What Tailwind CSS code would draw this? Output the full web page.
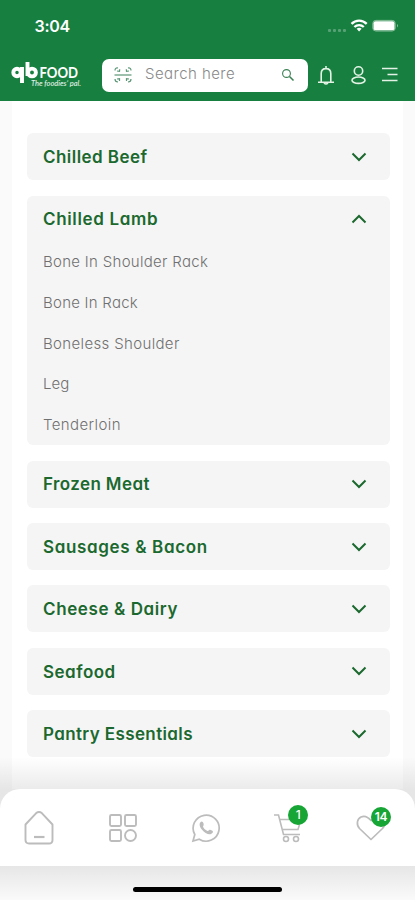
<!DOCTYPE html>
<html lang="en">
<head>
<meta charset="utf-8">
<meta name="viewport" content="width=device-width, initial-scale=1">
<title>QB Food</title>
<script src="https://cdn.jsdelivr.net/npm/@tailwindcss/browser@4"></script>
</head>
<body class="bg-[#fafafa] font-['Inter','Open_Sans',sans-serif] [font-feature-settings:'cv11']">
<div class="relative flex h-[900px] w-[415px] flex-col overflow-hidden">
  <header class="flex h-[101px] shrink-0 flex-col bg-[#178040] text-white">
    <div class="flex h-[51px] items-center justify-between pl-[34.500px] pr-[16px]">
      <span class="text-[16px] font-semibold leading-none -tracking-[0.300px]">3:04</span>
      <svg class="h-[16px] w-[72px]" viewBox="0 0 72 16" fill="none">
        <g fill="#58a175"><rect x="1" y="11" width="3" height="3" rx="1"/><rect x="6" y="11" width="3" height="3" rx="1"/><rect x="11" y="11" width="3" height="3" rx="1"/><rect x="16" y="11" width="3" height="3" rx="1"/></g>
        <g stroke="#fff" stroke-width="2.300"><path d="M24.500 5.900C28.800 1.500 35.400 1.500 39.700 5.900"/><path d="M27.400 9C30 6.500 34.200 6.500 36.800 9"/></g>
        <path d="M29.600 10.700Q32.100 8.700 34.600 10.700L32.100 13.500Z" fill="#fff"/>
        <rect x="45.800" y="2.400" width="22.400" height="10.600" rx="3" stroke="#8bc09e" stroke-width="1"/>
        <rect x="46.500" y="3.200" width="21" height="9" rx="2" fill="#fff"/>
        <path d="M70 6Q72 7.700 70 9.500Z" fill="#8bc09e"/>
      </svg>
    </div>
    <div class="flex h-[48px] items-center pl-[11px] pr-[17px]">
      <svg class="h-[32px] w-[72px] shrink-0" viewBox="0 0 72 32">
        <g fill="none" stroke="#fff" stroke-width="3.900"><circle cx="6" cy="13.500" r="3.700"/><circle cx="21" cy="13.500" r="3.900"/><path d="M11 8V24M16.500 3V17"/></g>
        <text x="28.500" y="18.500" class="font-['Lato',sans-serif] text-[14.500px] font-bold" fill="#fff" textLength="38.500" lengthAdjust="spacingAndGlyphs">FOOD</text>
        <text x="20" y="27" class="font-['Lato',sans-serif] text-[7px] font-medium italic" fill="#e6f3e9" textLength="50" lengthAdjust="spacingAndGlyphs">The foodies’ pal.</text>
      </svg>
      <div class="ml-[18.500px] flex h-[33px] w-[206.500px] items-center rounded-[7px] bg-white pl-[11px] pr-[13px]">
        <svg class="h-[18px] w-[20px]" viewBox="0 0 20 18" fill="none" stroke="#5b9676" stroke-width="1.200">
          <path d="M1.500 9H18.500"/><path d="M2 4.500Q2 1.500 5 2M4 5L6.500 5.300L6.700 3.300M18 4.500Q18 1.500 15 2M16 5L13.500 5.300L13.300 3.300M2 13Q2 16 5 16M4 13L6.500 12.700L6.500 15M18 13Q18 16 15 16M16 13L13.500 12.700L13.500 15"/>
        </svg>
        <span class="relative -top-px ml-[12.500px] grow whitespace-nowrap text-[15px] font-light tracking-[0.450px] text-[#888]">Search here</span>
        <svg class="h-[14px] w-[14px]" viewBox="0 0 14 14" fill="none" stroke="#3b8054"><circle cx="5.500" cy="5.500" r="3.900" stroke-width="1.100"/><path d="M8.500 8.500L12.500 12.500" stroke-width="1.600"/></svg>
      </div>
      <div class="flex grow items-center justify-between pl-[9px]">
        <svg class="h-[20px] w-[18px]" viewBox="0 0 18 20" fill="none" stroke="#e3f2e5" stroke-width="1.600"><path d="M4.200 17.300V8.500C4.200 5.500 6 3.600 9 3.600S13.800 5.500 13.800 8.500V17.300M1 17.300H17M9 1V3.500"/><path d="M7 18Q9 20 11 18"/></svg>
        <svg class="h-[20px] w-[17px]" viewBox="0 0 17 20" fill="none" stroke="#e3f2e5" stroke-width="1.600"><circle cx="8.500" cy="6" r="4.200"/><ellipse cx="8.500" cy="15.200" rx="6.500" ry="3.200"/></svg>
        <svg class="h-[20px] w-[17px]" viewBox="0 0 17 20" fill="none" stroke="#e3f2e5" stroke-width="1.700"><path d="M1 3.500H16.500M6.500 9.500H16.500M1 15.500H16.500"/></svg>
      </div>
    </div>
  </header>

  <main class="mx-[12px] flex grow flex-col gap-[15.500px] bg-white px-[14.500px] pt-[32.300px] pr-[13.500px] text-[17px] font-semibold text-[#1b692f]">
    <section class="flex h-[46.900px] shrink-0 items-center justify-between rounded-[6px] bg-[#f5f5f5] pl-[16.500px] pr-[23px]"><h2 class="pt-[2px] tracking-[0.450px]">Chilled Beef</h2><svg class="h-[10px] w-[16px]" viewBox="0 0 16 10" fill="none" stroke="currentColor" stroke-width="2"><path d="M1.500 1.500L8 8L14.500 1.500"/></svg></section>
    <section class="h-[249.500px] shrink-0 rounded-[6px] bg-[#f5f5f5] pl-[16.500px] pr-[23px]">
      <div class="flex h-[46.500px] items-center justify-between"><h2 class="pt-[2px] tracking-[0.650px]">Chilled Lamb</h2><svg class="h-[10px] w-[16px]" viewBox="0 0 16 10" fill="none" stroke="currentColor" stroke-width="2"><path d="M1.500 8.500L8 2L14.500 8.500"/></svg></div>
      <ul class="text-[15px] font-light leading-[40.700px] text-[#707070]">
        <li class="tracking-[0.300px]">Bone In Shoulder Rack</li>
        <li class="tracking-[0.250px]">Bone In Rack</li>
        <li class="tracking-[0.350px]">Boneless Shoulder</li>
        <li class="tracking-[0.100px]">Leg</li>
        <li class="tracking-[0.400px]">Tenderloin</li>
      </ul>
    </section>
    <section class="flex h-[46.900px] shrink-0 items-center justify-between rounded-[6px] bg-[#f5f5f5] pl-[16.500px] pr-[23px]"><h2 class="pt-[2px] tracking-[0.400px]">Frozen Meat</h2><svg class="h-[10px] w-[16px]" viewBox="0 0 16 10" fill="none" stroke="currentColor" stroke-width="2"><path d="M1.500 1.500L8 8L14.500 1.500"/></svg></section>
    <section class="flex h-[46.900px] shrink-0 items-center justify-between rounded-[6px] bg-[#f5f5f5] pl-[16.500px] pr-[23px]"><h2 class="pt-[2px] tracking-[0.650px]">Sausages &amp; Bacon</h2><svg class="h-[10px] w-[16px]" viewBox="0 0 16 10" fill="none" stroke="currentColor" stroke-width="2"><path d="M1.500 1.500L8 8L14.500 1.500"/></svg></section>
    <section class="flex h-[46.900px] shrink-0 items-center justify-between rounded-[6px] bg-[#f5f5f5] pl-[16.500px] pr-[23px]"><h2 class="pt-[2px] tracking-[0.600px]">Cheese &amp; Dairy</h2><svg class="h-[10px] w-[16px]" viewBox="0 0 16 10" fill="none" stroke="currentColor" stroke-width="2"><path d="M1.500 1.500L8 8L14.500 1.500"/></svg></section>
    <section class="flex h-[46.900px] shrink-0 items-center justify-between rounded-[6px] bg-[#f5f5f5] pl-[16.500px] pr-[23px]"><h2 class="pt-[2px] tracking-[0.500px]">Seafood</h2><svg class="h-[10px] w-[16px]" viewBox="0 0 16 10" fill="none" stroke="currentColor" stroke-width="2"><path d="M1.500 1.500L8 8L14.500 1.500"/></svg></section>
    <section class="flex h-[46.900px] shrink-0 items-center justify-between rounded-[6px] bg-[#f5f5f5] pl-[16.500px] pr-[23px]"><h2 class="pt-[2px] tracking-[0.380px]">Pantry Essentials</h2><svg class="h-[10px] w-[16px]" viewBox="0 0 16 10" fill="none" stroke="currentColor" stroke-width="2"><path d="M1.500 1.500L8 8L14.500 1.500"/></svg></section>
  </main>

  <footer class="relative flex h-[111px] shrink-0 flex-col items-center bg-[#fafafa]">
    <div class="absolute inset-x-0 -top-[32px] h-[32px] bg-linear-to-b from-black/0 to-black/8"></div>
    <div class="absolute inset-x-0 top-0 h-[30px] bg-black/8"></div>
    <div class="absolute inset-x-0 top-[77px] h-[34px] bg-linear-to-b from-black/8 to-black/0"></div>
    <nav class="relative flex h-[77px] w-full items-center justify-between rounded-t-[20px] bg-white pl-[23px] pr-[29px] pt-[1px] text-[#bcbcbc]">
      <svg class="h-[36px] w-[32px]" viewBox="0 0 32 36" fill="none" stroke="currentColor" stroke-width="1.900"><path d="M2.500 14.500L13.200 3.100Q16 0.800 18.800 3.100L29.500 14.500V30Q29.500 33.500 26 33.500H6Q2.500 33.500 2.500 30Z" stroke-linejoin="round"/><path d="M11 27H21.500" stroke-width="2.200"/></svg>
      <svg class="h-[30px] w-[30px]" viewBox="0 0 30 30" fill="none" stroke="currentColor" stroke-width="1.900"><rect x="2" y="2" width="11" height="11" rx="1.500"/><rect x="17" y="2" width="11" height="11" rx="1.500"/><rect x="2" y="17" width="11" height="11" rx="1.500"/><circle cx="22.500" cy="22.500" r="5.500"/></svg>
      <svg class="h-[30px] w-[30px]" viewBox="0 0 30 30" fill="none" stroke="currentColor" stroke-width="1.700"><path d="M2 28L3.800 21.500A13 13 0 1 1 8.300 26.200Z"/><path d="M10.500 8.500C8 9.500 8 13 10.800 16.500C14.500 21 19.500 23 21.800 19.500C22.500 18 21 17.500 19 16.800C17.800 16.400 17.500 18.500 16.500 18C14 17 12.500 15 12 13.500C13.500 12 12.500 8.500 10.500 8.500Z" fill="currentColor" stroke="none"/></svg>
      <div class="relative h-[30px] w-[30px]">
        <svg class="h-[30px] w-[30px]" viewBox="0 0 30 30" fill="none" stroke="currentColor" stroke-width="1.600"><path d="M1 2H5.500L10.500 21.500H27M7 6.500H28L25 16.500H9.500"/><circle cx="13" cy="26" r="2.500"/><circle cx="23" cy="26" r="2.500"/></svg>
        <span class="absolute -top-[8px] left-[15px] flex h-[20px] w-[20px] items-center justify-center rounded-full bg-[#17a536] text-[12px] font-medium text-white">1</span>
      </div>
      <div class="relative h-[30px] w-[30px]">
        <svg class="h-[30px] w-[30px]" viewBox="0 0 30 30" fill="none" stroke="currentColor" stroke-width="1.700" stroke-linejoin="round"><path d="M15 26.500L3.500 15.500C0 11.500 1 6 5 4C9 2 12.500 4.500 15 7.500C18 4 21 2 25 4C29 6 30 11.500 26.500 15.500Z"/></svg>
        <span class="absolute -top-[6px] left-[15px] flex h-[20px] w-[20px] items-center justify-center rounded-full bg-[#17a536] text-[12px] font-semibold tracking-[-0.300px] text-white">14</span>
      </div>
    </nav>
    <div class="relative mt-[21px] h-[5px] w-[149px] rounded-full bg-black"></div>
  </footer>
</div>
</body>
</html>
